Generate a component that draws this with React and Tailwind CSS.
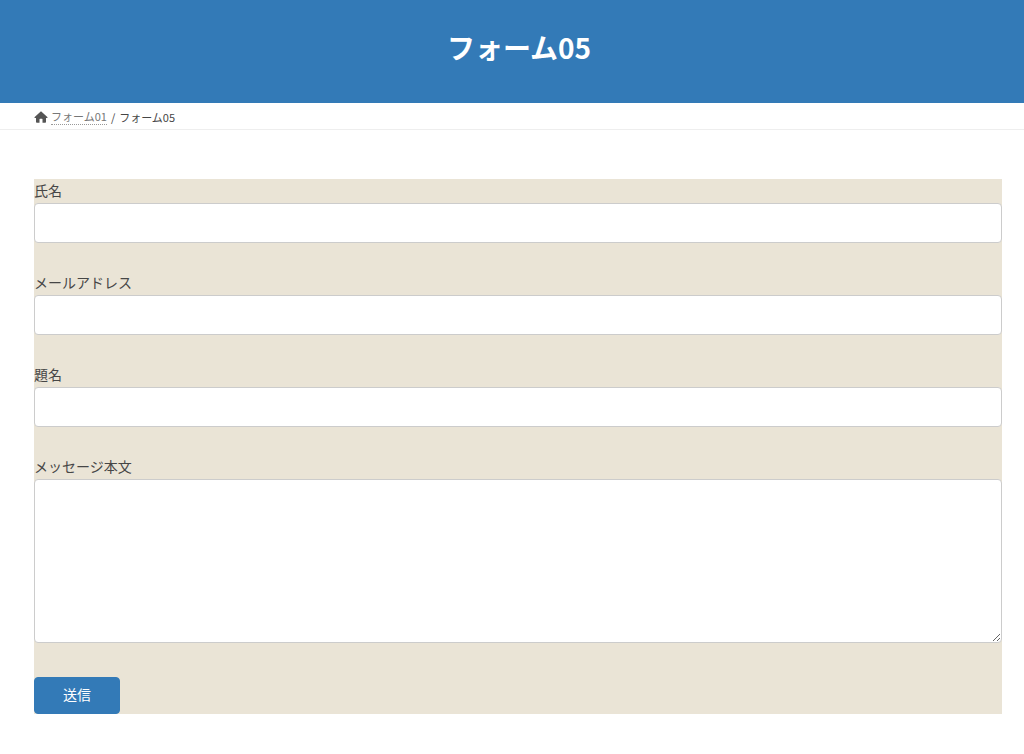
const fields = [
  { id: 'name', label: '氏名', type: 'text' },
  { id: 'email', label: 'メールアドレス', type: 'email' },
  { id: 'subject', label: '題名', type: 'text' },
];

const labelClass = 'block pb-0.5 text-sm leading-[22px]';

const controlClass =
  'block w-full rounded-sm border border-[#cccccc] bg-white px-3 text-sm text-[#464646] outline-none focus:border-[#337ab7]';

const HomeIcon = () => (
  <svg viewBox="0 0 14 12" className="h-3 w-[14px] shrink-0 text-[#555555]" fill="currentColor" aria-hidden="true">
    <path d="M7 .3 13.300 5.900c.4.4.2 1-.4 1h-.9v4.100c0 .5-.3.8-.8.8H8.500V8.300c0-.3-.2-.5-.5-.5H6c-.3 0-.5.200-.5.500v3.500H2.800c-.5 0-.8-.3-.8-.8V6.900h-.9c-.6 0-.8-.6-.4-1z" />
  </svg>
);

const Breadcrumb = () => (
  <nav className="border-b border-[#eeeeee] px-[34px]" aria-label="Breadcrumb">
    <ol className="flex items-center pt-1.5 pb-1 text-[11px] leading-4">
      <li className="flex items-center gap-[3px]">
        <HomeIcon />
        <a href="#" className="border-b border-dotted border-[#999999] leading-[15px] text-[#777777]">フォーム01</a>
      </li>
      <li className="px-1" aria-hidden="true">/</li>
      <li aria-current="page">フォーム05</li>
    </ol>
  </nav>
);

const App = () => {
  return (
    <div className="min-h-screen bg-white font-['Noto_Sans_CJK_JP',sans-serif] text-[#464646]">
      <header className="bg-[#337ab7] px-4 pt-7 pb-9 text-center text-white">
        <h1 className="pl-3.5 text-[28px] leading-[39px] font-bold">フォーム05</h1>
      </header>
      <Breadcrumb />

      <main className="pt-[49px] pr-[22px] pb-10 pl-[34px]">
        <form className="bg-[#eae4d6]" onSubmit={(e) => e.preventDefault()}>
          {fields.map((field) => (
            <div key={field.id} className="mb-7">
              <label htmlFor={field.id} className={labelClass}>{field.label}</label>
              <input id={field.id} name={field.id} type={field.type} className={`${controlClass} h-10`} />
            </div>
          ))}

          {/* Message */}
          <div className="mb-[34px]">
            <label htmlFor="message" className={labelClass}>メッセージ本文</label>
            <textarea id="message" name="message" className={`${controlClass} h-[164px] resize-y py-2`} />
          </div>

          <button
            type="submit"
            className="block rounded border border-[#337ab7] bg-[#337ab7] px-7 pt-1.5 pb-[9px] text-sm text-white"
          >
            送信
          </button>
        </form>
      </main>
    </div>
  );
};

export default App;
